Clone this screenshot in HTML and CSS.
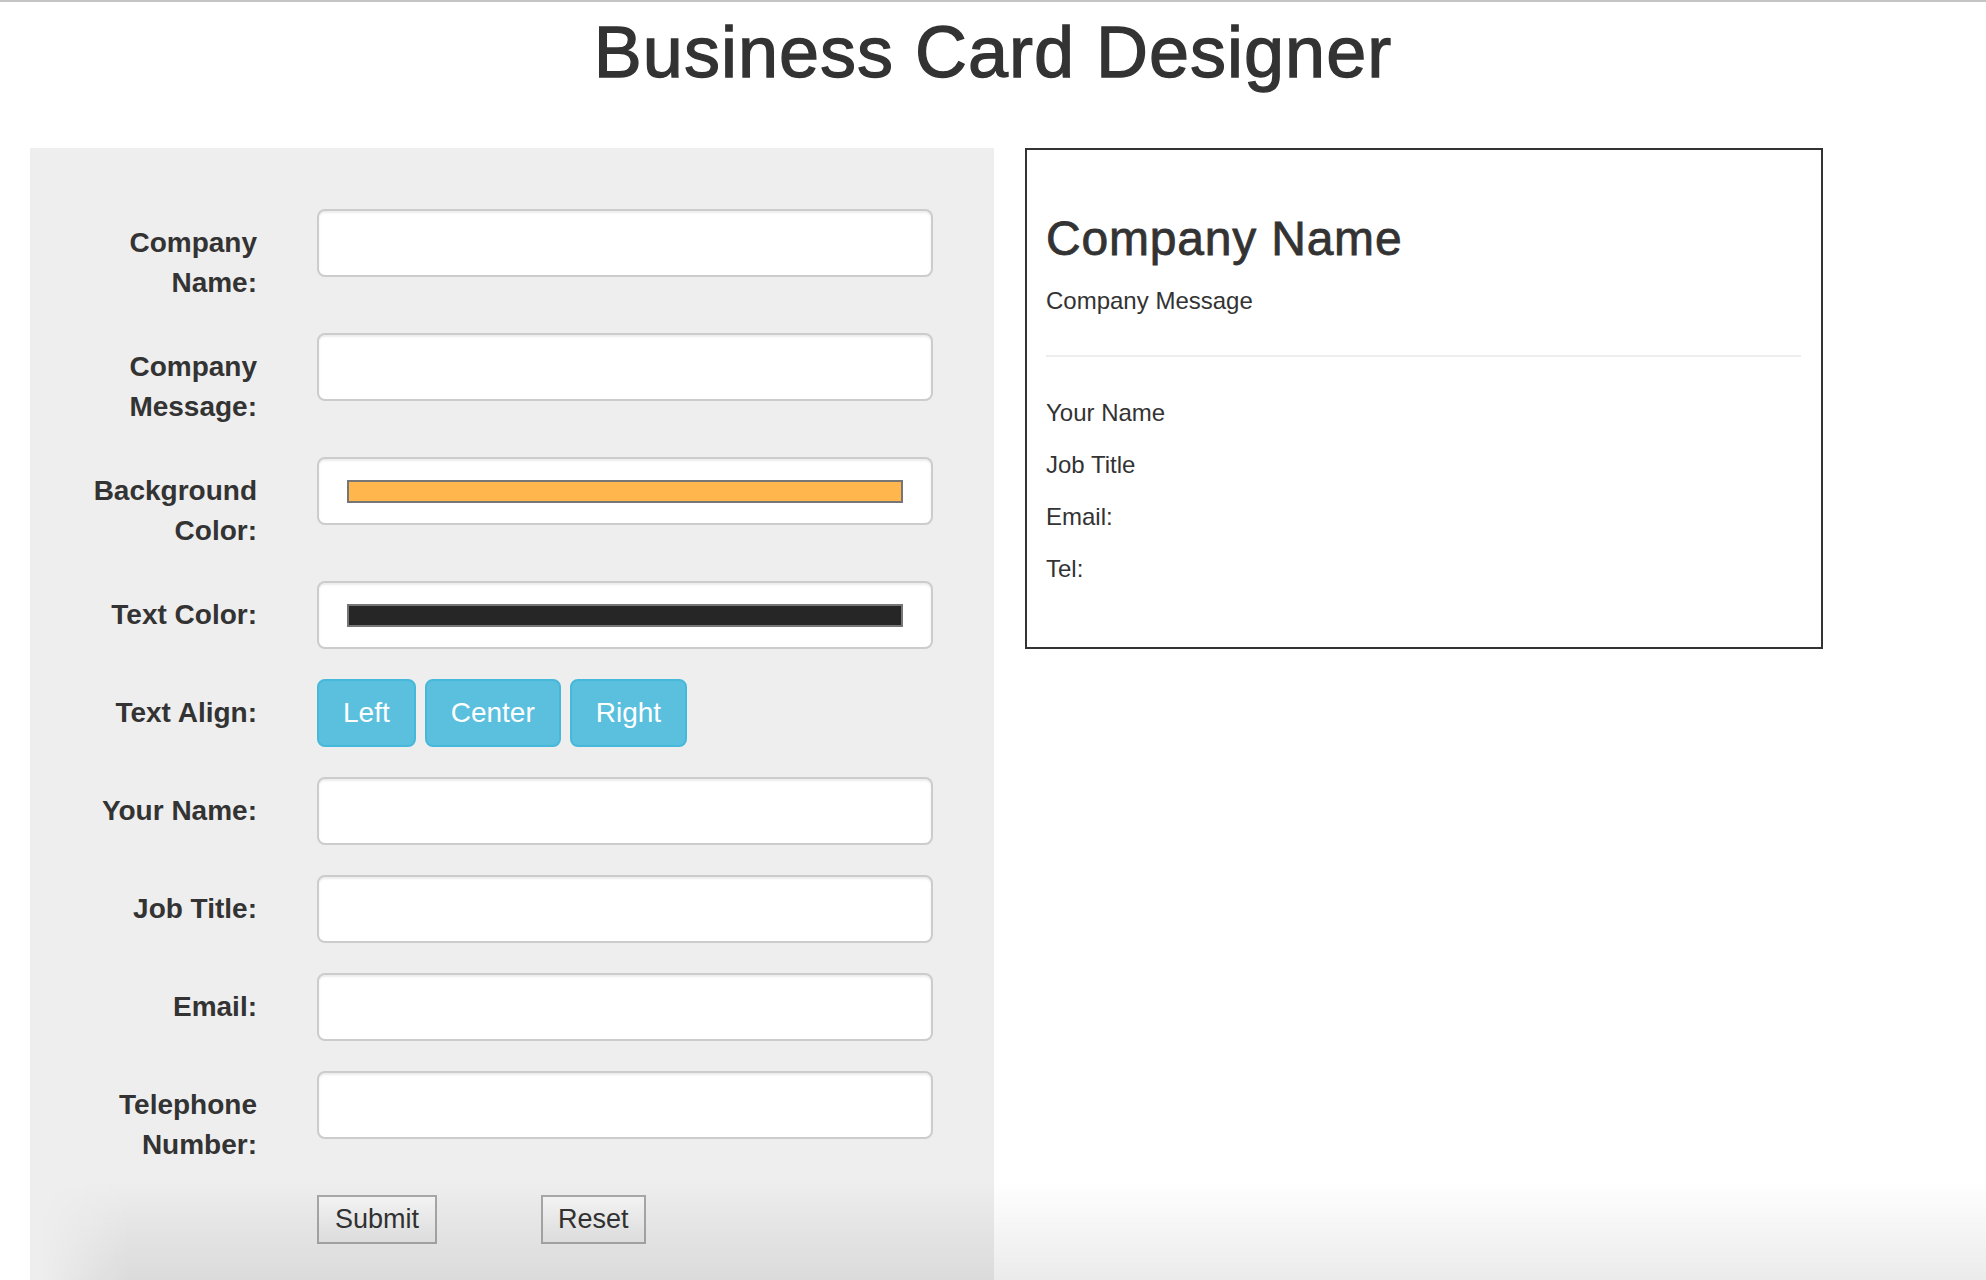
FILE: index.html
```html
<!DOCTYPE html>
<html lang="en">
<head>
<meta charset="utf-8">
<title>Business Card Designer</title>
<link rel="stylesheet" href="styles.css">
</head>
<body>
<div class="topline"></div>
<h1 class="page-title">Business Card Designer</h1>
<main class="layout">
  <form class="panel">
    <div class="form-row">
      <label class="form-label">Company<br>Name:</label>
      <div class="field"><input class="form-input" type="text"></div>
    </div>
    <div class="form-row">
      <label class="form-label">Company<br>Message:</label>
      <div class="field"><input class="form-input" type="text"></div>
    </div>
    <div class="form-row">
      <label class="form-label">Background<br>Color:</label>
      <div class="field"><div class="form-input color-input"><span class="swatch swatch-orange"></span></div></div>
    </div>
    <div class="form-row">
      <label class="form-label">Text Color:</label>
      <div class="field"><div class="form-input color-input"><span class="swatch swatch-dark"></span></div></div>
    </div>
    <div class="form-row">
      <label class="form-label">Text Align:</label>
      <div class="field align-group">
        <button type="button" class="btn-info">Left</button>
        <button type="button" class="btn-info">Center</button>
        <button type="button" class="btn-info">Right</button>
      </div>
    </div>
    <div class="form-row">
      <label class="form-label">Your Name:</label>
      <div class="field"><input class="form-input" type="text"></div>
    </div>
    <div class="form-row">
      <label class="form-label">Job Title:</label>
      <div class="field"><input class="form-input" type="text"></div>
    </div>
    <div class="form-row">
      <label class="form-label">Email:</label>
      <div class="field"><input class="form-input" type="text"></div>
    </div>
    <div class="form-row">
      <label class="form-label">Telephone<br>Number:</label>
      <div class="field"><input class="form-input" type="text"></div>
    </div>
    <div class="form-row actions-row">
      <div></div>
      <div class="field actions">
        <button type="button" class="btn-plain">Submit</button>
        <button type="reset" class="btn-plain btn-reset">Reset</button>
      </div>
    </div>
  </form>
  <section class="card">
    <h3 class="card-company">Company Name</h3>
    <p class="card-line">Company Message</p>
    <hr class="card-rule">
    <p class="card-line">Your Name</p>
    <p class="card-line">Job Title</p>
    <p class="card-line">Email:</p>
    <p class="card-line">Tel:</p>
  </section>
</main>
<div class="bottom-shade"></div>
</body>
</html>
```
FILE: styles.css
```css
html, body {
  margin: 0;
  padding: 0;
  height: 100%;
  overflow: hidden;
}
body {
  font-family: "Liberation Sans", Arial, sans-serif;
  color: #333;
  background: #fff;
  display: flex;
  flex-direction: column;
}
.topline {
  height: 2px;
  background: #c4c4c4;
  flex: none;
}
.page-title {
  margin: 11px 0 56px;
  font-size: 72px;
  line-height: 79px;
  font-weight: 500;
  letter-spacing: 1px;
  text-align: center;
  color: #333;
  -webkit-text-stroke: 1.3px #333;
  flex: none;
}
.layout {
  flex: 1;
  display: flex;
  align-items: flex-start;
  padding-left: 30px;
  gap: 31px;
}
.panel {
  align-self: stretch;
  width: 964px;
  box-sizing: border-box;
  background: #eee;
  padding: 61px 31px 0 32px;
}
.form-row {
  display: grid;
  grid-template-columns: 225px 676px;
  margin-bottom: 30px;
}
.form-label {
  text-align: right;
  padding: 14px 30px 0 0;
  font-size: 28px;
  line-height: 40px;
  font-weight: 700;
  color: #333;
}
.field {
  padding: 0 30px;
}
.form-input {
  display: block;
  width: 100%;
  height: 68px;
  box-sizing: border-box;
  margin: 0;
  border: 2px solid #ccc;
  border-radius: 8px;
  background: #fff;
  box-shadow: inset 0 2px 2px rgba(0, 0, 0, 0.075);
  font-family: inherit;
  font-size: 28px;
  padding: 0 24px;
}
.color-input {
  display: flex;
  align-items: center;
  padding: 0 28px;
}
.swatch {
  flex: 1;
  height: 23px;
  box-sizing: border-box;
  border: 2px solid #767676;
}
.swatch-orange { background: #ffb74d; }
.swatch-dark { background: #262626; }
.align-group {
  display: flex;
  gap: 9px;
}
.btn-info {
  height: 68px;
  box-sizing: border-box;
  padding: 0 24px;
  border: 2px solid #46b8da;
  border-radius: 8px;
  background: #5bc0de;
  color: #fff;
  font-family: inherit;
  font-size: 28px;
  line-height: 40px;
  cursor: pointer;
}
.actions {
  display: flex;
  align-items: flex-start;
}
.btn-plain {
  height: 49px;
  box-sizing: border-box;
  padding: 0 16px;
  border: 2px solid #a8a8a8;
  border-radius: 0;
  background: linear-gradient(#f6f6f6, #e8e8e8);
  color: #333;
  font-family: inherit;
  font-size: 27px;
}
.btn-reset {
  margin-left: 104px;
  padding: 0 15px;
}
.card {
  width: 798px;
  box-sizing: border-box;
  border: 2px solid #333;
  padding: 0 20px 42px 19px;
}
.card-company {
  margin: 62px 0 20px;
  font-size: 48px;
  line-height: 53px;
  font-weight: 500;
  letter-spacing: 0.8px;
  -webkit-text-stroke: 0.8px #333;
  color: #333;
}
.card-line {
  margin: 0 0 20px;
  font-size: 24px;
  line-height: 32px;
}
.card-rule {
  margin: 38px 0 40px;
  border: 0;
  border-top: 2px solid #eee;
  height: 0;
}
.bottom-shade {
  position: fixed;
  left: 40px;
  right: 0;
  bottom: 0;
  height: 100px;
  pointer-events: none;
  background: linear-gradient(rgba(0, 0, 0, 0), rgba(0, 0, 0, 0.08));
  -webkit-mask-image: linear-gradient(to right, transparent 0, #000 90px);
  mask-image: linear-gradient(to right, transparent 0, #000 90px);
}
```
